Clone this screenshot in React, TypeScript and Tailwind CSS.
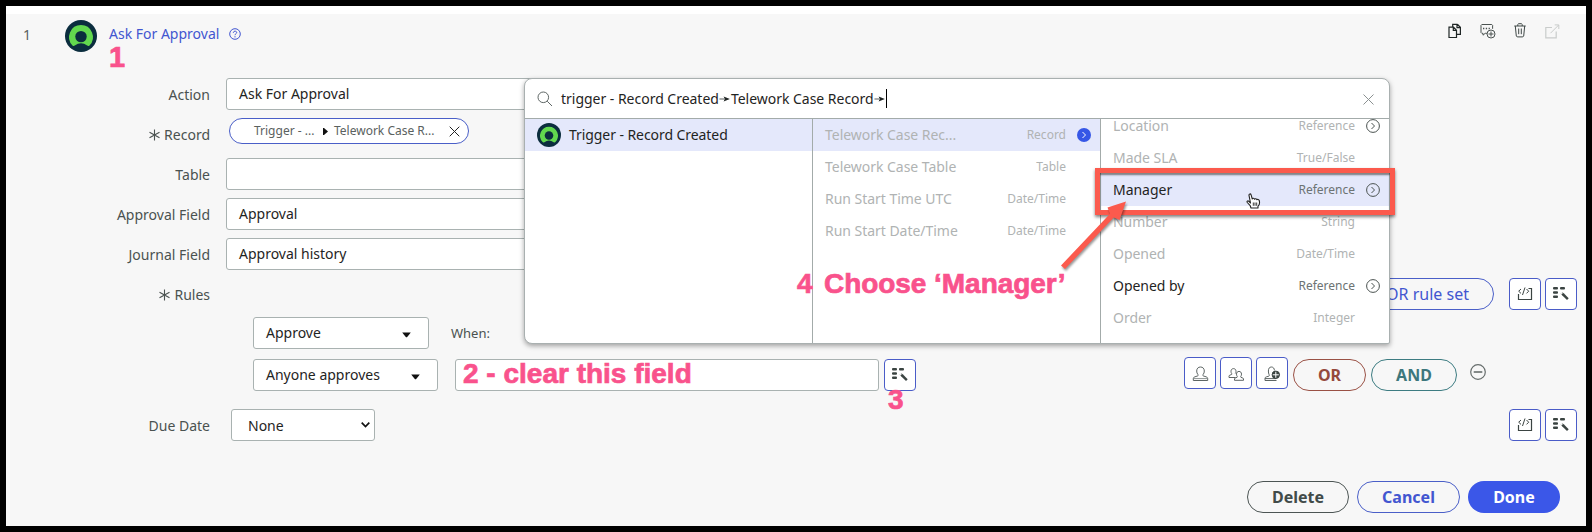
import React from "react";

const LABEL = "mt-px w-[204px] shrink-0 text-right text-[14px] leading-8 text-[#4a5250]";
const FIELD = "h-8 shrink-0 rounded-[3px] border border-[#a9b2b1] bg-white text-[14px] leading-[30px] text-[#1f2423]";
const ICON_BTN = "flex h-8 w-8 shrink-0 items-center justify-center rounded-[4px] border border-[#4a5cc8] bg-white";
const PINK = "absolute whitespace-pre font-['Liberation_Sans',Arial,sans-serif] font-bold text-[#f9528c] leading-none [-webkit-text-stroke:0.7px_#f9528c]";

function Logo({ size }: { size: number }) {
  return (
    <svg width={size} height={size} viewBox="0 0 32 32" className="shrink-0">
      <circle cx="16" cy="16" r="16" fill="#0b2d3e" />
      <path d="M16 5a12 12 0 0 0-8.500 20.400c.6.7 1.500.7 2.300.2a10.500 10.500 0 0 1 12.400 0c.8.5 1.700.5 2.300-.2A12 12 0 0 0 16 5z" fill="#62d84e" />
      <circle cx="16" cy="16.600" r="5.700" fill="#0b2d3e" />
    </svg>
  );
}

function Asterisk() {
  return (
    <svg width="11" height="12" viewBox="0 0 11 12" className="mr-[4px] inline-block align-[-1px]" fill="none" stroke="#4a5250" strokeWidth="1.100">
      <path d="M5.500.5v11M.5 3.200l10 5.600M10.500 3.200l-10 5.600" />
    </svg>
  );
}

function ScriptIcon() {
  return (
    <svg width="16" height="16" viewBox="0 0 16 16" fill="none" stroke="#3b4442" strokeWidth="1">
      <path d="M1.500 8v5.500h13v-11h-3" strokeWidth="1.200" />
      <path d="M4 3L1.700 5.200 4 7.400M9.500 3l2.200 2.200L9.500 7.400M8 1.500L5.500 9" />
    </svg>
  );
}

function PillPickerIcon() {
  return (
    <svg width="18" height="16" viewBox="0 0 18 16" fill="#3b4442">
      <rect x="1" y="1" width="5" height="2.600" rx="1" />
      <rect x="8" y="1" width="5" height="2.600" rx="1" />
      <rect x="1" y="5.200" width="5" height="2.600" rx="1" />
      <rect x="1" y="9.400" width="5" height="2.600" rx="1" />
      <path d="M8.700 7.200l1.300-1.300 2 1.500 4.700 4.900-1.700 1.700-4.900-4.800z" />
      <circle cx="9.700" cy="7" r="1" fill="#fff" />
    </svg>
  );
}

function IconPair() {
  return (
    <div className="ml-auto mr-[9px] flex gap-1">
      <div className={ICON_BTN}><ScriptIcon /></div>
      <div className={ICON_BTN}><PillPickerIcon /></div>
    </div>
  );
}

const PERSON = "M.8 14.500v-2c0-.8.6-1.300 1.400-1.600l3-1c.6-.2.6-.9.2-1.400C4.600 7.600 4.200 6.500 4.200 5 4.200 2.500 5.700 1 8 1s3.800 1.500 3.800 4c0 1.500-.4 2.600-1.200 3.500-.4.5-.4 1.200.2 1.400l3 1c.8.3 1.400.8 1.400 1.600v2z";

function UserIcon() {
  return (
    <svg width="17" height="16" viewBox="0 0 16 16" fill="none" stroke="#5d6564" strokeWidth="1" className="mt-[2px]"><path d={PERSON} /><path d="M1 12.600h14" strokeWidth=".7" /></svg>
  );
}

function GroupIcon() {
  return (
    <svg width="17" height="16" viewBox="0 0 17 16" fill="none" stroke="#4d5554" strokeWidth=".9" className="mt-[2px]">
      <path d="M7.500 11.500H1v-1.300c0-.6.4-.9 1-1.100l1.600-.6c.4-.2.300-.6.1-1C3.200 7 3 6.300 3 5.300 3 3.700 4 2.600 5.500 2.600S8 3.700 8 5.300c0 1-.2 1.700-.7 2.200" />
      <path d="M6.500 14.300V13c0-.6.400-.9 1-1.100l1.600-.6c.4-.2.300-.6.1-1-.5-.5-.7-1.200-.7-2.200 0-1.600 1-2.700 2.500-2.700s2.500 1.100 2.500 2.700c0 1-.2 1.700-.7 2.200-.2.400-.3.800.1 1l1.600.6c.6.2 1 .5 1 1.100v1.300z" />
    </svg>
  );
}

function UserAddIcon() {
  return (
    <svg width="17" height="16" viewBox="0 0 17 16" fill="none" stroke="#5d6564" className="mt-[2px]">
      <path d="M12.500 14.500H1v-2.200c0-.8.600-1.200 1.300-1.400l2.500-.7c.7-.3.600-1 .3-1.600C4.600 7.700 4.400 6.500 4.400 5c0-2.500 1-4 3-4s3 1.500 3 3.500M1 12.600h11" />
      <circle cx="11.800" cy="8.800" r="3.700" fill="#3b4442" stroke="#3b4442" />
      <path d="M11.800 5.800v6M8.800 8.800h6" stroke="#fff" />
    </svg>
  );
}

function HeaderIcons() {
  return (
    <>
      <svg className="absolute left-[1442px] top-[9px]" width="14" height="16" viewBox="0 0 14 16" fill="none" stroke="#1f2625" strokeWidth="1.200">
        <path d="M1 4.200h4.500l3 3v7.300H1zM5.300 4.200v3.200h3.200" />
        <path d="M4.700 4V1.300h4.500l3.200 3v7H8.700M9 1.300v3.300h3.400M9.600 1.500L12 4" />
      </svg>
      <svg className="absolute left-[1474px] top-[9px]" width="16" height="16" viewBox="0 0 16 16" fill="none" stroke="#4a5250">
        <path d="M7 10.300H5.200L3 12.200v-1.900H1.800L1 9.500V2.300l.8-.8h10l.8.8v3.500" />
        <path d="M3 5.500h1.300M5.800 5.500h1.300M8.600 5.500h1.300" strokeWidth="1.400" />
        <circle cx="11" cy="11" r="4" />
        <path d="M11 8.500v5M8.500 11h5" />
      </svg>
      <svg className="absolute left-[1508px] top-[9px]" width="12" height="15" viewBox="0 0 12 15" fill="none" stroke="#3f4846">
        <path d="M.3 3h11.400M3.800 3V1.400L4.600.7h2.800l.8.7V3M1.300 3l1 10 .9.900h5.600l.9-.9 1-10M4.700 5.500v5.700M7.300 5.500v5.700" />
      </svg>
      <svg className="absolute left-[1539px] top-[10px]" width="15" height="15" viewBox="0 0 15 15" fill="none" stroke="#c9cccb">
        <path d="M7 3.500H.8v10.300h10.400V7.500" strokeWidth="1.200" />
        <path d="M5.500 9.200L13.700 1M9.700.9h4.100V5" />
      </svg>
    </>
  );
}

function CircleChevron({ filled }: { filled?: boolean }) {
  return (
    <svg width="14" height="14" viewBox="0 0 14 14" fill="none">
      <circle cx="7" cy="7" r={filled ? 7 : 6.4} fill={filled ? "#3657e6" : "none"} stroke={filled ? "none" : "#4a5250"} />
      <path d="M5.500 4l3 3-3 3" stroke={filled ? "#fff" : "#4a5250"} />
    </svg>
  );
}

type Item = { name: string; type: string; chevron?: "line" | "filled"; selected?: boolean; active?: boolean };

function ItemRow({ name, type, chevron, selected, active }: Item) {
  return (
    <div className={`flex h-8 shrink-0 items-center pl-3 pr-[9px] ${selected ? "bg-[#e4e8fb]" : ""}`}>
      <span className={`mb-[2px] text-[14px] tracking-[-0.03px] ${active ? "text-[#1f2423]" : "text-[#b0b3b3]"}`}>{name}</span>
      <span className={`ml-auto text-[12px] ${active ? "text-[#6c7373]" : "text-[#b0b3b3]"}`}>{type}</span>
      <span className="ml-[11px] w-[14px]">{chevron && <CircleChevron filled={chevron === "filled"} />}</span>
    </div>
  );
}

const middleItems: Item[] = [
  { name: "Telework Case Rec...", type: "Record", chevron: "filled", selected: true },
  { name: "Telework Case Table", type: "Table" },
  { name: "Run Start Time UTC", type: "Date/Time" },
  { name: "Run Start Date/Time", type: "Date/Time" },
];

const recordItems: Item[] = [
  { name: "Location", type: "Reference", chevron: "line" },
  { name: "Made SLA", type: "True/False" },
  { name: "Manager", type: "Reference", chevron: "line", selected: true, active: true },
  { name: "Number", type: "String" },
  { name: "Opened", type: "Date/Time" },
  { name: "Opened by", type: "Reference", chevron: "line", active: true },
  { name: "Order", type: "Integer" },
];

function PathArrow() {
  return (
    <svg width="12" height="8" viewBox="0 0 13 8" className="shrink-0">
      <path d="M.5 4H6" stroke="#1f2423" strokeWidth=".8" />
      <path d="M5 1.200L11.800 4 5 6.800 6.300 4z" fill="#1f2423" />
    </svg>
  );
}

function DataPicker() {
  return (
    <div className="absolute left-[518px] top-[64px] flex h-[266px] w-[866px] flex-col overflow-hidden rounded-t-[8px] rounded-bl-[8px] rounded-br-[2px] border border-[#a9b0b0] bg-white shadow-[0_2px_5px_rgba(0,0,0,0.35)]">
      <div className="flex h-10 shrink-0 items-center border-b border-[#a3abaa] pl-3 text-[14px] tracking-[-0.02px] text-[#1f2423]">
        <svg width="16" height="16" viewBox="0 0 16 16" fill="none" stroke="#5f6766" className="mr-2">
          <circle cx="6.300" cy="6.300" r="5.300" />
          <path d="M10.200 10.200l4.800 4.800" />
        </svg>
        <span>trigger - Record Created</span>
        <PathArrow />
        <span>Telework Case Record</span>
        <PathArrow />
        <span className="h-[19px] w-px bg-black" />
        <svg width="11" height="11" viewBox="0 0 11 11" stroke="#8b9191" className="ml-auto mr-[15px] mt-[2px]"><path d="M.5.5l10 10M10.500.5l-10 10" /></svg>
      </div>
      <div className="grid min-h-0 flex-1 grid-cols-[288px_288px_1fr]">
        <div className="border-r border-[#a3abaa]">
          <div className="flex h-8 items-center bg-[#e4e8fb] pl-3 text-[14px] text-[#1f2423]">
            <Logo size={24} />
            <span className="mb-[2px] ml-2 tracking-[-0.07px]">Trigger - Record Created</span>
          </div>
        </div>
        <div className="border-r border-[#a3abaa]">
          {middleItems.map((i) => <ItemRow key={i.name} {...i} />)}
        </div>
        <div className="overflow-hidden">
          <div className="-mt-[9px] flex flex-col">
            {recordItems.map((i) => <ItemRow key={i.name} {...i} />)}
          </div>
        </div>
      </div>
    </div>
  );
}

function Annotations() {
  return (
    <>
      <div className={`${PINK} left-[103px] top-[29px] text-[29px]`}>1</div>
      <div className={`${PINK} left-[457px] top-[346px] text-[28px]`}>2 - clear this field</div>
      <div className={`${PINK} left-[882px] top-[372px] text-[28px]`}>3</div>
      <div className={`${PINK} left-[791px] top-[256px] text-[28px]`}>4</div>
      <div className={`${PINK} left-[818px] top-[256px] text-[28px] tracking-[-0.05px]`}>Choose ‘Manager’</div>
      <div className="absolute left-[1089px] top-[154px] h-[47px] w-[300px] border-[5px] border-[#fb5a4d] shadow-[0_2px_3px_rgba(0,0,0,0.5),inset_0_2px_2px_rgba(0,0,0,0.5)]" />
      <svg className="absolute left-[1050px] top-[180px] overflow-visible" width="80" height="80" viewBox="0 0 80 80">
        <path d="M5 71.500L54 19.800l-2.500-6.300L70 7.500 63.500 26l-5.700-2.600L9 75z" fill="#fb5a4d" className="drop-shadow-[1px_2px_1px_rgba(0,0,0,0.4)]" />
      </svg>
      <svg className="absolute left-[1240px] top-[179px]" width="16" height="16" viewBox="0 0 16 16" fill="#fff" stroke="#222" strokeWidth="1.100" strokeLinejoin="round">
        <path d="M5 15l-.8-2.300L1.300 9.500C.5 8.500 1.700 7.400 2.700 8.200L4.500 10 3 2.300C2.900.6 4.700.5 5.100 1.900L6.300 6c.2-1 2-1 2.300.3.400-.9 2-.7 2.300.5.500-.7 2.100-.4 2.300.7.600 2-.1 4.700-1.200 5.700V15z" />
        <path d="M7.300 9.500v3.300M9 9.500v3.300M10.700 9.500v3.300" strokeWidth=".9" />
      </svg>
    </>
  );
}

function Caret() {
  return <svg width="9" height="6" viewBox="0 0 9 6" className="mt-[3px]"><path d="M.2.5h8.600L5.400 4.800q-.9 1-1.800 0z" fill="#111" /></svg>;
}

export default function App() {
  return (
    <div className="h-[532px] w-[1592px] border-[6px] border-black bg-white pt-2 font-['Noto_Sans',sans-serif]">
      <div className="relative flex h-[512px] flex-col bg-[#f7f7f7]">
        <header className="flex h-16 shrink-0 pt-[6px]">
          <span className="ml-[17px] w-[42px] text-[14px] leading-[30px] text-[#5a6160]">1</span>
          <Logo size={32} />
          <span className="ml-3 text-[14px] leading-[27px] text-[#4256d0]">Ask For Approval</span>
          <svg width="12" height="12" viewBox="0 0 12 12" fill="none" stroke="#4256d0" className="ml-[10px] mt-[8px]">
            <circle cx="6" cy="6" r="5.300" />
            <path d="M4.300 4.800C4.300 2.600 7.700 2.700 7.700 4.600 7.700 5.700 6 5.700 6 7.200M6 8.200v1.200" />
          </svg>
          <HeaderIcons />
        </header>

        <div className="flex h-10 gap-4"><label className={LABEL}>Action</label><div className={`${FIELD} w-[500px] pl-3`}>Ask For Approval</div></div>
        <div className="flex h-10">
          <label className={LABEL}><Asterisk />Record</label>
          <div className="ml-[19px] flex h-[26px] w-[240px] items-center whitespace-nowrap rounded-full border border-[#4a5fc8] bg-white pl-6 text-[12px] text-[#5a6160]">
            <span className="w-[59px] shrink-0">Trigger - ...</span>
            <svg width="5" height="7" viewBox="0 0 5 7" className="ml-[10px] mr-[6px] shrink-0"><path d="M0 0h1l4 3.500L1 7H0z" fill="#111" /></svg>
            <span>Telework Case R...</span>
            <svg width="11" height="11" viewBox="0 0 11 11" stroke="#222" className="ml-auto mr-2 shrink-0"><path d="M.7.7l9.600 9.600M10.300.7L.7 10.300" /></svg>
          </div>
        </div>
        <div className="flex h-10 gap-4"><label className={LABEL}>Table</label><div className={`${FIELD} w-[500px]`} /></div>
        <div className="flex h-10 gap-4"><label className={LABEL}>Approval Field</label><div className={`${FIELD} w-[500px] pl-3`}>Approval</div></div>
        <div className="flex h-10 gap-4"><label className={LABEL}>Journal Field</label><div className={`${FIELD} w-[500px] pl-3`}>Approval history</div></div>

        <div className="flex h-[39px]">
          <label className={LABEL}><Asterisk />Rules</label>
          <div className="ml-[1094px] h-8 w-[190px] shrink-0 rounded-full border border-[#4a5fc8] pr-6 text-right text-[16px] leading-[30px] text-[#4256d0]">OR rule set</div>
          <IconPair />
        </div>

        <div className="flex h-[42px] pl-[247px]">
          <div className={`${FIELD} flex w-[176px] items-center justify-between pl-3 pr-[17px]`}>Approve<Caret /></div>
          <span className="ml-[22px] text-[13px] leading-8 text-[#4a5250]">When:</span>
        </div>

        <div className="flex h-[50px] pl-[247px]">
          <div className={`${FIELD} flex w-[185px] items-center justify-between pl-3 pr-[17px]`}>Anyone approves<Caret /></div>
          <div className={`${FIELD} ml-[17px] w-[424px]`} />
          <div className={`${ICON_BTN} ml-[5px]`}><PillPickerIcon /></div>
          <div className="-mt-[2px] ml-[268px] flex gap-1">
            <div className={ICON_BTN}><UserIcon /></div>
            <div className={ICON_BTN}><GroupIcon /></div>
            <div className={ICON_BTN}><UserAddIcon /></div>
          </div>
          <div className="ml-[5px] flex h-8 w-[73px] items-center justify-center rounded-full border border-[#9a5145] text-[16px] font-bold text-[#95493c]">OR</div>
          <div className="ml-[5px] flex h-8 w-[86px] items-center justify-center rounded-full border border-[#3d7c82] text-[16px] font-bold text-[#3d777d]">AND</div>
          <svg width="16" height="16" viewBox="0 0 16 16" fill="none" stroke="#666d6c" strokeWidth="1.200" className="ml-[13px] mt-[5px]">
            <circle cx="8" cy="8" r="7.300" />
            <path d="M3.700 8h8.600" strokeWidth="1.600" />
          </svg>
        </div>

        <div className="flex h-[72px]">
          <label className={LABEL}>Due Date</label>
          <div className={`${FIELD} ml-[21px] flex w-[144px] items-center justify-between pl-4 pr-[4px]`}>
            <span className="mt-[2px]">None</span>
            <svg width="9" height="6" viewBox="0 0 9 6" fill="none" stroke="#111" strokeWidth="1.700"><path d="M.7.700L4.500 4.500 8.300.7" /></svg>
          </div>
          <IconPair />
        </div>

        <footer className="mr-[26px] flex justify-end gap-2 text-[16px] font-bold">
          <button className="h-8 w-[102px] rounded-full border border-[#4c5554] text-[#414b49]">Delete</button>
          <button className="h-8 w-[103px] rounded-full border border-[#4a5fc8] text-[#4256d0]">Cancel</button>
          <button className="h-8 w-[92px] rounded-full bg-[#3b57e8] text-white">Done</button>
        </footer>

        <DataPicker />
        <Annotations />
      </div>
    </div>
  );
}
